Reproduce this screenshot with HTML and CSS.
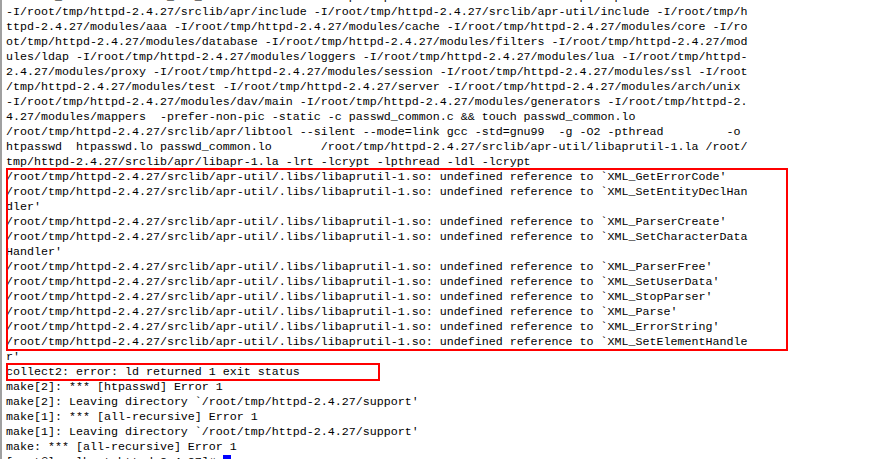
FILE: index.html
```html
<!DOCTYPE html>
<html>
<head>
<meta charset="utf-8">
<link rel="stylesheet" href="styles.css">
</head>
<body>
<div class="term">
  <div class="out">
    <div class="ln">INUX -D_REENTRANT    -D_GNU_SOURCE -I. -I/root/tmp/httpd-2.4.27/os/unix -I/root/tmp/httpd-2.4.27/include</div>
    <div class="ln">-I/root/tmp/httpd-2.4.27/srclib/apr/include -I/root/tmp/httpd-2.4.27/srclib/apr-util/include -I/root/tmp/h</div>
    <div class="ln">ttpd-2.4.27/modules/aaa -I/root/tmp/httpd-2.4.27/modules/cache -I/root/tmp/httpd-2.4.27/modules/core -I/ro</div>
    <div class="ln">ot/tmp/httpd-2.4.27/modules/database -I/root/tmp/httpd-2.4.27/modules/filters -I/root/tmp/httpd-2.4.27/mod</div>
    <div class="ln">ules/ldap -I/root/tmp/httpd-2.4.27/modules/loggers -I/root/tmp/httpd-2.4.27/modules/lua -I/root/tmp/httpd-</div>
    <div class="ln">2.4.27/modules/proxy -I/root/tmp/httpd-2.4.27/modules/session -I/root/tmp/httpd-2.4.27/modules/ssl -I/root</div>
    <div class="ln">/tmp/httpd-2.4.27/modules/test -I/root/tmp/httpd-2.4.27/server -I/root/tmp/httpd-2.4.27/modules/arch/unix</div>
    <div class="ln">-I/root/tmp/httpd-2.4.27/modules/dav/main -I/root/tmp/httpd-2.4.27/modules/generators -I/root/tmp/httpd-2.</div>
    <div class="ln">4.27/modules/mappers  -prefer-non-pic -static -c passwd_common.c &amp;&amp; touch passwd_common.lo</div>
    <div class="ln">/root/tmp/httpd-2.4.27/srclib/apr/libtool --silent --mode=link gcc -std=gnu99  -g -O2 -pthread         -o</div>
    <div class="ln">htpasswd  htpasswd.lo passwd_common.lo       /root/tmp/httpd-2.4.27/srclib/apr-util/libaprutil-1.la /root/</div>
    <div class="ln">tmp/httpd-2.4.27/srclib/apr/libapr-1.la -lrt -lcrypt -lpthread -ldl -lcrypt</div>
    <div class="mark big">
      <div class="ln">/root/tmp/httpd-2.4.27/srclib/apr-util/.libs/libaprutil-1.so: undefined reference to `XML_GetErrorCode'</div>
      <div class="ln">/root/tmp/httpd-2.4.27/srclib/apr-util/.libs/libaprutil-1.so: undefined reference to `XML_SetEntityDeclHan</div>
      <div class="ln">dler'</div>
      <div class="ln">/root/tmp/httpd-2.4.27/srclib/apr-util/.libs/libaprutil-1.so: undefined reference to `XML_ParserCreate'</div>
      <div class="ln">/root/tmp/httpd-2.4.27/srclib/apr-util/.libs/libaprutil-1.so: undefined reference to `XML_SetCharacterData</div>
      <div class="ln">Handler'</div>
      <div class="ln">/root/tmp/httpd-2.4.27/srclib/apr-util/.libs/libaprutil-1.so: undefined reference to `XML_ParserFree'</div>
      <div class="ln">/root/tmp/httpd-2.4.27/srclib/apr-util/.libs/libaprutil-1.so: undefined reference to `XML_SetUserData'</div>
      <div class="ln">/root/tmp/httpd-2.4.27/srclib/apr-util/.libs/libaprutil-1.so: undefined reference to `XML_StopParser'</div>
      <div class="ln">/root/tmp/httpd-2.4.27/srclib/apr-util/.libs/libaprutil-1.so: undefined reference to `XML_Parse'</div>
      <div class="ln">/root/tmp/httpd-2.4.27/srclib/apr-util/.libs/libaprutil-1.so: undefined reference to `XML_ErrorString'</div>
      <div class="ln">/root/tmp/httpd-2.4.27/srclib/apr-util/.libs/libaprutil-1.so: undefined reference to `XML_SetElementHandle</div>
    </div>
    <div class="ln">r'</div>
    <div class="mark small">
      <div class="ln">collect2: error: ld returned 1 exit status</div>
    </div>
    <div class="ln">make[2]: *** [htpasswd] Error 1</div>
    <div class="ln">make[2]: Leaving directory `/root/tmp/httpd-2.4.27/support'</div>
    <div class="ln">make[1]: *** [all-recursive] Error 1</div>
    <div class="ln">make[1]: Leaving directory `/root/tmp/httpd-2.4.27/support'</div>
    <div class="ln">make: *** [all-recursive] Error 1</div>
    <div class="ln">[root@localhost httpd-2.4.27]# <span class="cursor"></span></div>
  </div>
</div>
</body>
</html>
```
FILE: styles.css
```css
html, body {
  margin: 0;
  padding: 0;
  background: #ffffff;
  overflow: hidden;
}
.term {
  width: 873px;
  height: 459px;
  overflow: hidden;
  border-left: 2px solid #a0a0a0;
  box-sizing: border-box;
  background: #ffffff;
}
.out {
  margin-top: -10px;
  padding-left: 4px;
  font-family: "Liberation Mono", "Courier New", monospace;
  font-size: 11.667px;
  line-height: 15px;
  color: #000000;
}
.ln {
  white-space: pre;
  height: 15px;
}
.mark {
  position: relative;
}
.mark::after {
  content: "";
  position: absolute;
  border: 2px solid #ff0000;
  pointer-events: none;
}
.big::after {
  left: 0;
  top: -2px;
  width: 778px;
  bottom: -1px;
}
.small::after {
  left: 0;
  top: -2px;
  width: 370px;
  bottom: -1px;
}
.cursor {
  display: inline-block;
  width: 8px;
  height: 15px;
  background: #0000ff;
  vertical-align: top;
}
```
